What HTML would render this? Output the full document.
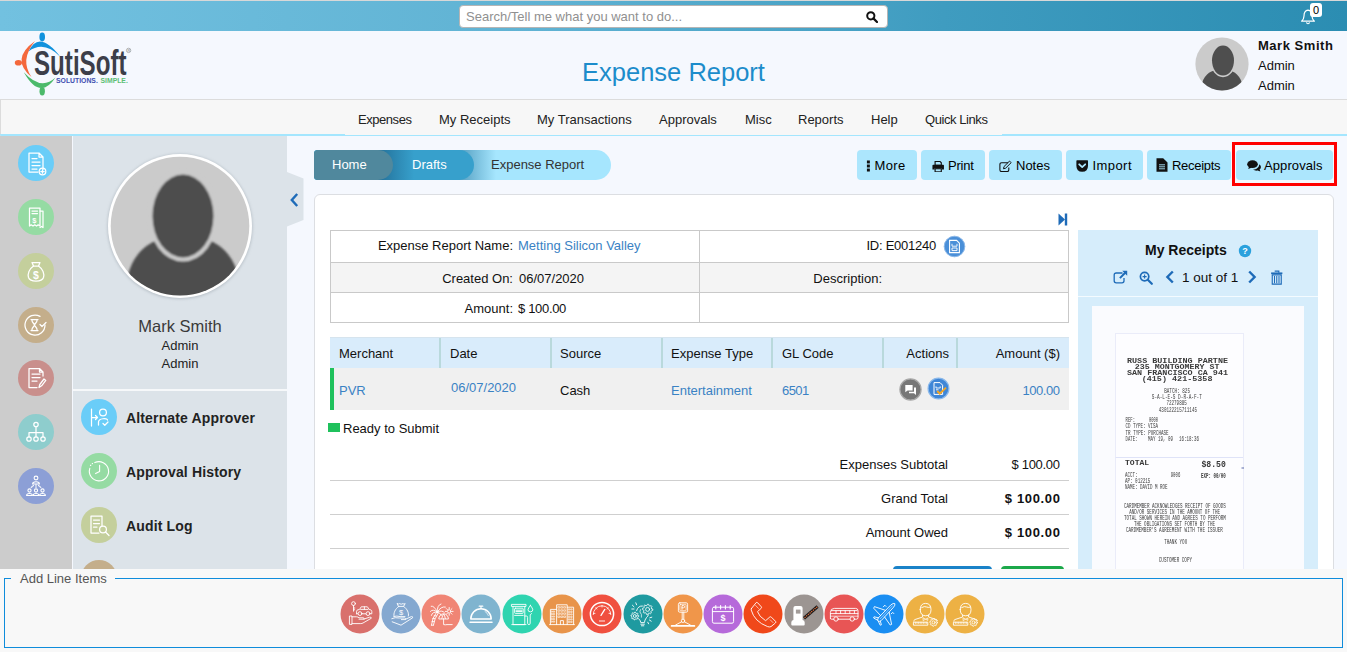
<!DOCTYPE html>
<html>
<head>
<meta charset="utf-8">
<title>Expense Report</title>
<style>
*{box-sizing:border-box;margin:0;padding:0}
html,body{width:1347px;height:652px;overflow:hidden}
body{font-family:"Liberation Sans",sans-serif;font-size:13px;color:#111;background:#f5f8fe;position:relative}
.abs{position:absolute}
/* top bar */
#topbar{left:0;top:0;width:1347px;height:31px;background:linear-gradient(90deg,#72c1e0 0%,#5fb2d3 40%,#3f9cc0 70%,#2b8db2 100%);border-top:1px solid #d8d8d8}
#search{left:459px;top:5px;width:429px;height:23px;background:#fff;border:1px solid #b5b5b5;border-radius:4px;color:#909090;font-size:13px;line-height:21px;padding-left:6px}
/* header */
#header{left:0;top:31px;width:1347px;height:68px;background:#f5f8fe}
#title{left:0;top:54px;width:1347px;text-align:center;font-size:25.5px;color:#1c8ccb;line-height:36px}
/* nav */
#nav{left:0;top:99px;width:1347px;height:37px;background:#f7f7f7;border-top:1px solid #dcdcdc;border-left:1px solid #dcdcdc;border-bottom:1px solid #a4e6fe}
#nav span{position:absolute;top:12px;font-size:13px;color:#222;white-space:nowrap}
/* left */
#strip{left:0;top:136px;width:72px;height:434px;background:#cccccc}
#panel{left:73px;top:136px;width:214px;height:434px;background:#dce3e9}
.ico{position:absolute;border-radius:50%}
/* main */
#card{left:314px;top:194px;width:1020px;height:390px;background:#fff;border:1px solid #dcdee2;border-radius:6px}
.btn{position:absolute;top:150px;height:30px;background:#ace6fd;border-radius:4px;font-size:13px;line-height:30px;color:#000;white-space:nowrap}
/* bottom */
#bottom{left:0;top:569px;width:1347px;height:83px;background:#f8f8f8}
#fs{left:4px;top:578px;width:1339px;height:70px;border:1px solid #0f8cdb}
</style>
</head>
<body>
<div id="topbar" class="abs"></div>
<div id="search" class="abs">Search/Tell me what you want to do...</div>
<div id="header" class="abs"></div>
<svg class="abs" style="left:866px;top:11px" width="12" height="12" viewBox="0 0 12 12"><circle cx="4.8" cy="4.8" r="3.6" fill="none" stroke="#111" stroke-width="2"/><path d="M7.4 7.4 L11 11" stroke="#111" stroke-width="2.2" stroke-linecap="round"/></svg>
<!-- bell -->
<svg class="abs" style="left:1299px;top:8px" width="18" height="18" viewBox="0 0 18 18"><path d="M9 2.2 C5.8 2.6 5 5.4 5 8 C5 10.6 4 12 2.6 13.2 L15.4 13.2 C14 12 13 10.6 13 8 C13 5.4 12.2 2.6 9 2.2 Z" fill="none" stroke="#fff" stroke-width="1.2" stroke-linejoin="round"/><path d="M7.6 14.2 C7.6 16.2 10.4 16.2 10.4 14.2" fill="none" stroke="#fff" stroke-width="1.1"/></svg>
<div class="abs" style="left:1310px;top:3px;width:12px;height:14px;background:#fff;border-radius:3px;font-size:11px;line-height:14px;text-align:center;color:#000">0</div>
<!-- logo -->
<svg class="abs" style="left:8px;top:30px" width="132" height="70" viewBox="8 30 132 70">
<ellipse cx="42.2" cy="37" rx="2.8" ry="4.4" fill="#1192dd"/>
<path d="M28.5 51.5 Q39 29 60.5 57 Q44 40 28.5 51.5 Z" fill="#1192dd"/>
<ellipse cx="18.4" cy="62.8" rx="3.6" ry="2.8" fill="#f4683c"/>
<path d="M35 41 Q10 59 31.5 77 Q19.5 60 35 41 Z" fill="#f4683c"/>
<ellipse cx="42.2" cy="91.2" rx="2.7" ry="4.2" fill="#4cba6b"/>
<path d="M23.8 72.2 Q40 101 55.5 77.5 Q41 91 23.8 72.2 Z" fill="#4cba6b"/>
<text x="34" y="75.2" font-family="Liberation Sans, sans-serif" font-weight="bold" font-size="35" fill="#3c3e49" textLength="92.5" lengthAdjust="spacingAndGlyphs">SutiSoft</text>
<text x="56" y="82.9" font-family="Liberation Sans, sans-serif" font-weight="bold" font-size="6.8" fill="#3d4eb0" textLength="41.8" lengthAdjust="spacingAndGlyphs">SOLUTIONS.</text>
<text x="100.5" y="82.9" font-family="Liberation Sans, sans-serif" font-weight="bold" font-size="6.8" fill="#5bbf75" textLength="27.3" lengthAdjust="spacingAndGlyphs">SIMPLE.</text>
<circle cx="128.6" cy="50.4" r="2.2" fill="none" stroke="#8a8a8a" stroke-width="0.6"/>
<text x="127.4" y="51.7" font-family="Liberation Sans, sans-serif" font-size="3.6" fill="#777">R</text>
</svg>
<!-- user -->
<svg class="abs" style="left:1195px;top:37px" width="54" height="54" viewBox="0 0 54 54"><defs><clipPath id="cpu"><circle cx="27" cy="27" r="26.6"/></clipPath></defs><circle cx="27" cy="27" r="26.6" fill="#cbcbcb"/><g clip-path="url(#cpu)"><path d="M6 54 C6 42 12 35.5 19 33.5 L35 33.5 C42 35.5 48 42 48 54 Z" fill="#4e4e4e"/><ellipse cx="28" cy="23.6" rx="12.6" ry="16.6" fill="#cbcbcb"/><ellipse cx="28" cy="23.6" rx="11" ry="15" fill="#4e4e4e"/></g></svg>
<div class="abs" style="left:1258px;top:38px;font-size:13px;font-weight:bold;letter-spacing:0.53px;color:#111;white-space:nowrap;line-height:15px">Mark Smith</div>
<div class="abs" style="left:1258px;top:58px;font-size:13px;color:#111;line-height:15px">Admin</div>
<div class="abs" style="left:1258px;top:78px;font-size:13px;color:#111;line-height:15px">Admin</div>
<div id="title" class="abs">Expense Report</div>
<div id="nav" class="abs">
<span style="left:357px;letter-spacing:-0.45px">Expenses</span>
<span style="left:438px">My Receipts</span>
<span style="left:536px">My Transactions</span>
<span style="left:658px">Approvals</span>
<span style="left:744px">Misc</span>
<span style="left:797px">Reports</span>
<span style="left:870px">Help</span>
<span style="left:924px;letter-spacing:-0.43px">Quick Links</span>
</div>
<div class="abs" style="left:0;top:134px;width:345px;height:1px;background:#a4e6fe"></div><div class="abs" style="left:1002px;top:134px;width:345px;height:1px;background:#a4e6fe"></div>
<div id="strip" class="abs"></div>
<div id="panel" class="abs"></div>
<svg class="abs" style="left:18px;top:144.8px" width="36" height="36" viewBox="0 0 36 36"><circle cx="18" cy="18" r="18" fill="#6acdf8"/><g fill="none" stroke="#fff" stroke-width="1.25" stroke-linecap="round" stroke-linejoin="round"><path d="M11 8 H21 L25 12 V24.5 M25 12 H21 V8 M11 8 V27 H20"/><path d="M14 13.5H19M14 17H22M14 20.5H22M14 24H19"/><circle cx="24.5" cy="26.5" r="3.3"/><path d="M24.5 24.8V28.2M22.8 26.5H26.2"/></g></svg>
<svg class="abs" style="left:18px;top:198.7px" width="36" height="36" viewBox="0 0 36 36"><circle cx="18" cy="18" r="18" fill="#95dba3"/><g fill="none" stroke="#fff" stroke-width="1.25" stroke-linecap="round" stroke-linejoin="round"><path d="M11.5 9 H22 V27 L20.2 25.8 L18.5 27 L16.8 25.8 L15 27 L13.2 25.8 L11.5 27 Z"/><path d="M22 12 H25 V28.5 L23.5 27.5 L22 28.5"/><path d="M14 12H19.5M14 14.5H19.5"/><text x="14.2" y="23.5" font-size="7.5" font-family="Liberation Sans" font-weight="bold" fill="#fff" stroke="none">$</text></g></svg>
<svg class="abs" style="left:18px;top:252.6px" width="36" height="36" viewBox="0 0 36 36"><circle cx="18" cy="18" r="18" fill="#c4cf9c"/><g fill="none" stroke="#fff" stroke-width="1.25" stroke-linecap="round" stroke-linejoin="round"><path d="M14 9.5 H22 L20.5 13 H15.5 Z"/><path d="M15.5 13 C11 16 9.5 21 10.5 24.5 C11.5 27.5 14 28 18 28 C22 28 24.5 27.5 25.5 24.5 C26.5 21 25 16 20.5 13"/><text x="14.9" y="25.6" font-size="10.5" font-family="Liberation Sans" font-weight="bold" fill="#fff" stroke="none">$</text></g></svg>
<svg class="abs" style="left:18px;top:306.5px" width="36" height="36" viewBox="0 0 36 36"><circle cx="18" cy="18" r="18" fill="#c4ae8b"/><g fill="none" stroke="#fff" stroke-width="1.25" stroke-linecap="round" stroke-linejoin="round"><path d="M27 18 A10 10 0 1 1 22 9.4"/><path d="M13 12.5H20M13 23.5H20M13.8 12.5 C13.8 16 16.5 16.5 16.5 18 C16.5 19.5 13.8 20 13.8 23.5 M19.2 12.5 C19.2 16 16.5 16.5 16.5 18 C16.5 19.5 19.2 20 19.2 23.5"/><path d="M22 17.5 L24 19.5 L28 15.5"/></g></svg>
<svg class="abs" style="left:18px;top:360.4px" width="36" height="36" viewBox="0 0 36 36"><circle cx="18" cy="18" r="18" fill="#c98f8c"/><g fill="none" stroke="#fff" stroke-width="1.25" stroke-linecap="round" stroke-linejoin="round"><path d="M11 8.5 H21.5 L25 12 V16 M25 12 H21.5 V8.5 M11 8.5 V27.5 H19"/><path d="M14 14H22M14 17.5H22M14 21H19"/><path d="M21 27.5 L21.8 24.5 L26 19 L27.8 20.4 L23.6 25.8 Z"/></g></svg>
<svg class="abs" style="left:18px;top:414.3px" width="36" height="36" viewBox="0 0 36 36"><circle cx="18" cy="18" r="18" fill="#8ecdcd"/><g fill="none" stroke="#fff" stroke-width="1.25" stroke-linecap="round" stroke-linejoin="round"><circle cx="18" cy="10.5" r="2.2"/><circle cx="11" cy="25" r="2.2"/><circle cx="18" cy="25" r="2.2"/><circle cx="25" cy="25" r="2.2"/><path d="M18 12.7V22.8M11 22.8V18.5H25V22.8"/></g></svg>
<svg class="abs" style="left:18px;top:468.2px" width="36" height="36" viewBox="0 0 36 36"><circle cx="18" cy="18" r="18" fill="#8c9fd6"/><g fill="none" stroke="#fff" stroke-width="1.1" stroke-linecap="round" stroke-linejoin="round" stroke-width="0.9"><circle cx="18" cy="10" r="1.9"/><path d="M14.6 16 C14.6 13 21.4 13 21.4 16 Z"/><circle cx="11.5" cy="22.5" r="1.6"/><path d="M8.6 27.5 C8.6 24.8 14.4 24.8 14.4 27.5 Z"/><circle cx="18" cy="22.5" r="1.6"/><path d="M15.1 27.5 C15.1 24.8 20.9 24.8 20.9 27.5 Z"/><circle cx="24.5" cy="22.5" r="1.6"/><path d="M21.6 27.5 C21.6 24.8 27.4 24.8 27.4 27.5 Z"/><path d="M18 16.5V20M15.5 17.5L12.5 20M20.5 17.5L23.5 20" stroke-dasharray="1 1"/></g></svg>
<svg class="abs" style="left:104px;top:150px;overflow:visible" width="152" height="152" viewBox="0 0 152 152"><defs><clipPath id="cpa"><circle cx="76" cy="76" r="69.5"/></clipPath><filter id="sh" x="-20%" y="-20%" width="140%" height="140%"><feGaussianBlur stdDeviation="1.6"/></filter><filter id="ab" x="-10%" y="-10%" width="120%" height="120%"><feGaussianBlur stdDeviation="0.8"/></filter></defs><circle cx="76" cy="76.5" r="72.5" fill="#9aa3ab" opacity="0.55" filter="url(#sh)"/><circle cx="76" cy="76" r="72" fill="#fff"/><circle cx="76" cy="76" r="69.3" fill="#cbcbcb"/><g clip-path="url(#cpa)"><g filter="url(#ab)"><path d="M21 152 C21 112 36 96 58 88 L100 88 C122 96 137 112 137 152 Z" fill="#4d4d4d"/><ellipse cx="79" cy="66" rx="34.5" ry="45.5" fill="#cbcbcb"/><ellipse cx="79" cy="66" rx="30.5" ry="41.5" fill="#4d4d4d"/></g></g></svg>
<div class="abs" style="left:73px;top:316px;width:214px;text-align:center;font-size:16.5px;line-height:20px;color:#3a3a3a">Mark Smith</div>
<div class="abs" style="left:73px;top:338px;width:214px;text-align:center;font-size:13px;line-height:15px;color:#222">Admin</div>
<div class="abs" style="left:73px;top:356px;width:214px;text-align:center;font-size:13px;line-height:15px;color:#222">Admin</div>
<div class="abs" style="left:73px;top:389px;width:214px;height:1.5px;background:#f6f8fa"></div>
<svg class="abs" style="left:287px;top:172px" width="18" height="56" viewBox="0 0 18 56"><path d="M0 0 L16.5 6.5 V48 L0 54.5 Z" fill="#dce3e9"/><path d="M10.2 22 L4.8 28 L10.2 34" fill="none" stroke="#1e6bb8" stroke-width="2.4"/></svg>
<svg class="abs" style="left:81px;top:399px" width="36" height="36" viewBox="0 0 36 36"><circle cx="18" cy="18" r="18" fill="#6acdf8"/><g fill="none" stroke="#fff" stroke-width="1.25" stroke-linecap="round" stroke-linejoin="round"><path d="M10.5 10V27M10.5 18.5H16.5M14.5 16.5L16.5 18.5L14.5 20.5"/><circle cx="22" cy="13.5" r="3.4"/><path d="M17.5 26 V23 C17.5 19 26.5 19 26.5 21"/><path d="M22 24.5 L23.8 26.3 L27 23"/></g></svg>
<div class="abs" style="left:126px;top:409px;font-size:14px;font-weight:bold;line-height:18px;color:#222;white-space:nowrap;letter-spacing:0.15px">Alternate Approver</div>
<svg class="abs" style="left:81px;top:453px" width="36" height="36" viewBox="0 0 36 36"><circle cx="18" cy="18" r="18" fill="#95dba3"/><g fill="none" stroke="#fff" stroke-width="1.1" stroke-linecap="round" stroke-linejoin="round" stroke-width="1.7"><path d="M13.8 9.6 A9.6 9.6 0 1 1 8.8 15.4"/><path d="M18.6 12.4V18.6L14.6 20.6"/><path d="M9.5 12.5 L11.5 10.5" stroke-dasharray="0.5 2"/></g></svg>
<div class="abs" style="left:126px;top:463px;font-size:14px;font-weight:bold;line-height:18px;color:#222;white-space:nowrap;letter-spacing:0.15px">Approval History</div>
<svg class="abs" style="left:81px;top:507px" width="36" height="36" viewBox="0 0 36 36"><circle cx="18" cy="18" r="18" fill="#c4cf9c"/><g fill="none" stroke="#fff" stroke-width="1.25" stroke-linecap="round" stroke-linejoin="round"><path d="M21 19 V9 H10 V26 H18"/><path d="M12.5 13H18.5M12.5 16.5H18.5M12.5 20H16"/><circle cx="22" cy="22.5" r="3.4"/><path d="M24.5 25 L28 28.5"/></g></svg>
<div class="abs" style="left:126px;top:517px;font-size:14px;font-weight:bold;line-height:18px;color:#222;white-space:nowrap;letter-spacing:0.15px">Audit Log</div>
<div class="abs" style="left:81px;top:560px;width:36px;height:36px;border-radius:50%;background:#c4ae8b"></div>
<div class="abs" style="left:314px;top:150px;width:297px;height:30px;border-radius:3px 15px 15px 3px;background:#a6e6fe;overflow:hidden">
<div class="abs" style="left:140px;top:0;width:42px;height:30px;background:linear-gradient(90deg,rgba(40,120,160,0.75),rgba(166,230,254,0))"></div>
<div class="abs" style="left:0;top:0;width:160px;height:30px;border-radius:3px 15px 15px 3px;background:#37a0cc"></div>
<div class="abs" style="left:64px;top:0;width:36px;height:30px;background:linear-gradient(90deg,rgba(30,100,140,0.8),rgba(55,160,204,0))"></div>
<div class="abs" style="left:0;top:0;width:79px;height:30px;border-radius:3px 15px 15px 3px;background:#50889d"></div>
<div class="abs" style="left:18px;top:7px;font-size:13px;line-height:16px;color:#fff">Home</div>
<div class="abs" style="left:98px;top:7px;font-size:13px;line-height:16px;color:#fff">Drafts</div>
<div class="abs" style="left:177px;top:7px;font-size:13px;line-height:16px;color:#333;white-space:nowrap">Expense Report</div>
</div>
<div class="btn" style="left:857px;width:60px"><svg class="abs" style="left:8.6px;top:10px" width="4.6" height="12" viewBox="0 0 5 13"><rect x="1" y="0.5" width="3.2" height="3.2" fill="#111"/><rect x="1" y="4.9" width="3.2" height="3.2" fill="#111"/><rect x="1" y="9.3" width="3.2" height="3.2" fill="#111"/></svg><span class="abs" style="left:17.5px;top:1px;letter-spacing:0.35px">More</span></div>
<div class="btn" style="left:921px;width:64px"><svg class="abs" style="left:10.6px;top:10.5px" width="12.4" height="11.5" viewBox="0 0 14 13"><path d="M3.5 0.5 H9 L10.5 2 V5 H3.5 Z" fill="none" stroke="#111" stroke-width="1.3"/><path d="M0.5 5 Q0.5 4.2 1.5 4.2 H12.5 Q13.5 4.2 13.5 5 V9.5 H11 V8 H3 V9.5 H0.5 Z" fill="#111"/><rect x="3.5" y="8.7" width="7" height="3.6" fill="none" stroke="#111" stroke-width="1.3"/></svg><span class="abs" style="left:27px;top:1px;letter-spacing:-0.2px">Print</span></div>
<div class="btn" style="left:989px;width:73px"><svg class="abs" style="left:9.6px;top:9.5px" width="13.4" height="12.5" viewBox="0 0 15 14"><path d="M10 3 H3 Q1 3 1 5 V11 Q1 13 3 13 H9 Q11 13 11 11 V8.5" fill="none" stroke="#111" stroke-width="1.2"/><path d="M5 9.8 L5.6 7.4 L11.8 1.2 L13.6 3 L7.4 9.2 Z" fill="none" stroke="#111" stroke-width="1.1" stroke-linejoin="round"/></svg><span class="abs" style="left:27px;top:1px;letter-spacing:0px">Notes</span></div>
<div class="btn" style="left:1066px;width:77px"><svg class="abs" style="left:10.2px;top:9.8px" width="12.4" height="12.2" viewBox="0 0 13 13"><path d="M0.3 1 Q0.3 0.3 1 0.3 H12 Q12.7 0.3 12.7 1 V6 Q12.7 12.5 6.5 12.5 Q0.3 12.5 0.3 6 Z" fill="#111"/><path d="M3.3 4.6 L6.5 7.6 L9.7 4.6" fill="none" stroke="#ace6fd" stroke-width="1.9" stroke-linecap="round" stroke-linejoin="round"/></svg><span class="abs" style="left:26.5px;top:1px;letter-spacing:0.43px">Import</span></div>
<div class="btn" style="left:1147px;width:84px"><svg class="abs" style="left:9px;top:8px" width="12" height="14" viewBox="0 0 12 14"><path d="M0.5 0.3 H7.2 L11.5 4.6 V13.7 H0.5 Z" fill="#111"/><path d="M3 6.8H9M3 8.8H9M3 10.8H9" stroke="#ace6fd" stroke-width="0.9"/></svg><span class="abs" style="left:25px;top:1px;letter-spacing:-0.3px">Receipts</span></div>
<div class="btn" style="left:1236px;width:97px"><svg class="abs" style="left:11px;top:10px" width="14" height="12" viewBox="0 0 14 12"><ellipse cx="5.5" cy="4.2" rx="5.3" ry="3.9" fill="#111"/><path d="M1.2 9 L2.2 6 L5 7.6 Z" fill="#111"/><path d="M12.2 4.2 C13.4 5 13.9 6 13.9 7 C13.9 8 13.4 9 12.6 9.6 L13.4 11.6 L10.6 10.6 C9 10.9 7.2 10.6 6 9.6 C9.5 9.4 12.2 7.4 12.2 4.2 Z" fill="#111"/></svg><span class="abs" style="left:28px;top:1px;letter-spacing:0.1px">Approvals</span></div>
<div class="abs" style="left:1232px;top:142px;width:105px;height:44px;border:3px solid #ff0000"></div>
<div id="card" class="abs"></div>
<svg class="abs" style="left:1058px;top:213px" width="10" height="13" viewBox="0 0 10 13"><path d="M0.5 0.5 L7 6.5 L0.5 12.5 Z" fill="#1e6bb8"/><rect x="6.8" y="0.5" width="2.4" height="12" fill="#1e6bb8"/></svg>
<div class="abs" style="left:330px;top:230px;width:739px;height:93px;border:1px solid #c9c9c9;background:#fff"></div>
<div class="abs" style="left:331px;top:262px;width:737px;height:31px;background:#f4f4f4;border-top:1px solid #c9c9c9;border-bottom:1px solid #c9c9c9"></div>
<div class="abs" style="left:699px;top:231px;width:1px;height:91px;background:#c9c9c9"></div>
<div class="abs" style="font-size:13px;line-height:15px;white-space:nowrap;color:#111;left:331px;top:238px;width:182px;text-align:right">Expense Report Name:</div>
<div class="abs" style="font-size:13px;line-height:15px;white-space:nowrap;color:#111;left:518px;top:238px;color:#3a82c4">Metting Silicon Valley</div>
<div class="abs" style="font-size:13px;line-height:15px;white-space:nowrap;color:#111;left:331px;top:271px;width:182px;text-align:right">Created On:</div>
<div class="abs" style="font-size:13px;line-height:15px;white-space:nowrap;color:#111;left:519px;top:271px">06/07/2020</div>
<div class="abs" style="font-size:13px;line-height:15px;white-space:nowrap;color:#111;left:331px;top:301px;width:182px;text-align:right">Amount:</div>
<div class="abs" style="font-size:13px;line-height:15px;white-space:nowrap;color:#111;left:518px;top:301px;letter-spacing:-0.33px">$ 100.00</div>
<div class="abs" style="font-size:13px;line-height:15px;white-space:nowrap;color:#111;left:700px;top:238px;width:236px;text-align:right;letter-spacing:-0.25px">ID: E001240</div>
<div class="abs" style="font-size:13px;line-height:15px;white-space:nowrap;color:#111;left:700px;top:271px;width:182px;text-align:right">Description:</div>
<svg class="abs" style="left:943px;top:235px" width="23" height="23" viewBox="0 0 23 23"><circle cx="11.5" cy="11.5" r="10.3" fill="#4a8fd8" stroke="#8cb8e8" stroke-width="1"/><path d="M6.6 5.4 H13.6 L16.4 8.2 V17.6 H6.6 Z" fill="none" stroke="#fff" stroke-width="1.1"/><path d="M9 8.8 V11.2 H14 V8.8 M9 13 H14 V15.6 H9 Z" fill="none" stroke="#fff" stroke-width="0.9"/></svg>
<div class="abs" style="left:330px;top:337px;width:739px;height:31px;background:#d9ecfb;border-top:1px solid #d6e4ee"></div>
<div class="abs" style="left:439px;top:338px;width:2px;height:30px;background:#b9d9dc"></div>
<div class="abs" style="left:550px;top:338px;width:2px;height:30px;background:#b9d9dc"></div>
<div class="abs" style="left:661px;top:338px;width:2px;height:30px;background:#b9d9dc"></div>
<div class="abs" style="left:771px;top:338px;width:2px;height:30px;background:#b9d9dc"></div>
<div class="abs" style="left:882px;top:338px;width:2px;height:30px;background:#b9d9dc"></div>
<div class="abs" style="left:956px;top:338px;width:2px;height:30px;background:#b9d9dc"></div>
<div class="abs" style="left:330px;top:368px;width:739px;height:42px;background:#f0f0f0"></div>
<div class="abs" style="left:330px;top:368px;width:4px;height:42px;background:#1fc15c"></div>
<div class="abs" style="font-size:13px;line-height:15px;white-space:nowrap;color:#111;top:346px;left:339px">Merchant</div>
<div class="abs" style="font-size:13px;line-height:15px;white-space:nowrap;color:#111;top:346px;left:450px">Date</div>
<div class="abs" style="font-size:13px;line-height:15px;white-space:nowrap;color:#111;top:346px;left:560px">Source</div>
<div class="abs" style="font-size:13px;line-height:15px;white-space:nowrap;color:#111;top:346px;left:671px">Expense Type</div>
<div class="abs" style="font-size:13px;line-height:15px;white-space:nowrap;color:#111;top:346px;left:782px">GL Code</div>
<div class="abs" style="font-size:13px;line-height:15px;white-space:nowrap;color:#111;top:346px;left:883px;width:66px;text-align:right">Actions</div>
<div class="abs" style="font-size:13px;line-height:15px;white-space:nowrap;color:#111;top:346px;left:957px;width:103px;text-align:right">Amount ($)</div>
<div class="abs" style="font-size:13px;line-height:15px;white-space:nowrap;color:#111;top:383px;color:#3a82c4;left:339px">PVR</div>
<div class="abs" style="font-size:13px;line-height:15px;white-space:nowrap;color:#111;top:383px;color:#3a82c4;left:451px;top:380px">06/07/2020</div>
<div class="abs" style="font-size:13px;line-height:15px;white-space:nowrap;color:#111;top:383px;color:#3a82c4;left:560px;color:#111">Cash</div>
<div class="abs" style="font-size:13px;line-height:15px;white-space:nowrap;color:#111;top:383px;color:#3a82c4;left:671px">Entertainment</div>
<div class="abs" style="font-size:13px;line-height:15px;white-space:nowrap;color:#111;top:383px;color:#3a82c4;left:782px;letter-spacing:-0.6px">6501</div>
<div class="abs" style="font-size:13px;line-height:15px;white-space:nowrap;color:#111;top:383px;color:#3a82c4;left:957px;width:103px;text-align:right;letter-spacing:-0.45px;margin-left:-0.45px">100.00</div>
<svg class="abs" style="left:899px;top:378px" width="23" height="23" viewBox="0 0 23 23"><circle cx="11.5" cy="11.5" r="10.6" fill="#777" stroke="#a8a8a8" stroke-width="1.2"/><path d="M6.3 7 H13.6 V12.4 H8.6 L6.3 14.3 Z" fill="#fff"/><path d="M15 9.6 H17 V15.2 L17 17 L15 15.2 H10 V13.8 H15 Z" fill="#fff"/></svg>
<svg class="abs" style="left:927px;top:377px" width="23" height="23" viewBox="0 0 23 23"><circle cx="11.5" cy="11.5" r="10.4" fill="#3f86d6" stroke="#8ab8ea" stroke-width="1.2"/><path d="M7 5.6 H13 L15.6 8.2 V17.4 H7 Z" fill="none" stroke="#fff" stroke-width="1"/><path d="M9 9.4 V11 H13.2 V9.4 M9 12.8 H11.5" fill="none" stroke="#fff" stroke-width="0.9"/><path d="M10.2 14 L12.8 16.6 L19 10.6" fill="none" stroke="#f5a623" stroke-width="2"/></svg>
<div class="abs" style="left:328px;top:423px;width:12px;height:9px;background:#1fc15c"></div>
<div class="abs" style="font-size:13px;line-height:15px;white-space:nowrap;color:#111;left:343px;top:421px">Ready to Submit</div>
<div class="abs" style="left:330px;top:480px;width:739px;height:1px;background:#cfcfcf"></div>
<div class="abs" style="left:330px;top:514px;width:739px;height:1px;background:#cfcfcf"></div>
<div class="abs" style="left:330px;top:548px;width:739px;height:1px;background:#cfcfcf"></div>
<div class="abs" style="font-size:13px;line-height:15px;white-space:nowrap;color:#111;left:748px;top:457px;width:200px;text-align:right">Expenses Subtotal</div>
<div class="abs" style="font-size:13px;line-height:15px;white-space:nowrap;color:#111;left:960px;top:457px;width:100px;text-align:right;letter-spacing:-0.3px;margin-left:-0.3px">$ 100.00</div>
<div class="abs" style="font-size:13px;line-height:15px;white-space:nowrap;color:#111;left:748px;top:491px;width:200px;text-align:right">Grand Total</div>
<div class="abs" style="font-size:13px;line-height:15px;white-space:nowrap;color:#111;left:960px;top:491px;width:100px;text-align:right;font-weight:bold;letter-spacing:0.66px;margin-left:0.66px">$ 100.00</div>
<div class="abs" style="font-size:13px;line-height:15px;white-space:nowrap;color:#111;left:748px;top:525px;width:200px;text-align:right">Amount Owed</div>
<div class="abs" style="font-size:13px;line-height:15px;white-space:nowrap;color:#111;left:960px;top:525px;width:100px;text-align:right;font-weight:bold;letter-spacing:0.66px;margin-left:0.66px">$ 100.00</div>
<div class="abs" style="left:893px;top:566px;width:99px;height:30px;border-radius:4px;background:#1a82c8"></div>
<div class="abs" style="left:1001px;top:566px;width:63px;height:30px;border-radius:4px;background:#1ca84a"></div>
<div class="abs" style="left:1078px;top:230px;width:240px;height:345px;background:#d6edfb"></div>
<div class="abs" style="left:1078px;top:296px;width:240px;height:1px;background:#f4fbff"></div>
<div class="abs" style="left:1145px;top:242px;font-size:14px;font-weight:bold;line-height:17px;color:#111;white-space:nowrap;letter-spacing:0px">My Receipts</div>
<svg class="abs" style="left:1238px;top:244px" width="14" height="14" viewBox="0 0 14 14"><circle cx="7" cy="7" r="6.2" fill="#2aa1dd"/><text x="7" y="10.2" text-anchor="middle" font-family="Liberation Sans" font-weight="bold" font-size="9" fill="#fff">?</text></svg>
<svg class="abs" style="left:1113px;top:270px" width="15" height="14" viewBox="0 0 15 14"><path d="M9.5 3 H3.2 Q1.2 3 1.2 5 V10.8 Q1.2 12.8 3.2 12.8 H9 Q11 12.8 11 10.8 V8" fill="none" stroke="#1e6bb8" stroke-width="1.3"/><path d="M9.2 0.8 H14.2 V5.8 L12.4 4 L7.6 8.8 L6.2 7.4 L11 2.6 Z" fill="#1e6bb8"/></svg>
<svg class="abs" style="left:1139px;top:271px" width="14" height="14" viewBox="0 0 14 14"><circle cx="5.6" cy="5.6" r="4.2" fill="none" stroke="#1e6bb8" stroke-width="1.7"/><path d="M8.8 8.8 L12.8 12.8" stroke="#1e6bb8" stroke-width="2.2" stroke-linecap="round"/><path d="M5.6 3.6V7.6M3.6 5.6H7.6" stroke="#1e6bb8" stroke-width="1.1"/></svg>
<svg class="abs" style="left:1165px;top:270px" width="10" height="14" viewBox="0 0 10 14"><path d="M7.8 1.5 L2.4 7 L7.8 12.5" fill="none" stroke="#1e6bb8" stroke-width="2.4"/></svg>
<div class="abs" style="left:1182px;top:269px;font-size:13.5px;line-height:17px;color:#111;white-space:nowrap">1 out of 1</div>
<svg class="abs" style="left:1247px;top:270px" width="10" height="14" viewBox="0 0 10 14"><path d="M2.2 1.5 L7.6 7 L2.2 12.5" fill="none" stroke="#1e6bb8" stroke-width="2.4"/></svg>
<svg class="abs" style="left:1270px;top:270px" width="13.5" height="15" viewBox="0 0 14 16"><path d="M4.8 1.2 H9.2 V3" fill="none" stroke="#1e6bb8" stroke-width="1.2"/><rect x="1" y="2.6" width="12" height="1.8" fill="#1e6bb8"/><path d="M2.2 5.2 H11.8 V15 H2.2 Z" fill="none" stroke="#1e6bb8" stroke-width="1.2"/><path d="M4.6 6.5V14M7 6.5V14M9.4 6.5V14" stroke="#1e6bb8" stroke-width="1.1"/></svg>
<div class="abs" style="left:1092px;top:306px;width:212px;height:264px;background:#fafbfe;overflow:hidden"><svg class="abs" style="left:0;top:0" width="212" height="264" viewBox="0 0 212 264"><defs><filter id="rb" x="-5%" y="-5%" width="110%" height="110%"><feGaussianBlur stdDeviation="0.28"/></filter></defs>
<rect x="23.5" y="27.5" width="128" height="240" fill="#fdfdff" stroke="#eaecf9" stroke-width="1"/>
<path d="M23.5 151.5 H151" stroke="#dfe3f8" stroke-width="1.2"/>
<path d="M149.5 162 h2.5" stroke="#5a6aa8" stroke-width="1"/>
<g font-family="Liberation Mono, monospace" fill="#3a3a3a" filter="url(#rb)">
<text x="35.0" y="56.7" font-size="7.3" font-weight="bold" textLength="101.0" lengthAdjust="spacingAndGlyphs">RUSS BUILDING PARTNE</text>
<text x="42.8" y="62.6" font-size="7.3" font-weight="bold" textLength="84.6" lengthAdjust="spacingAndGlyphs">235 MONTGOMERY ST</text>
<text x="35.0" y="68.7" font-size="7.3" font-weight="bold" textLength="101.0" lengthAdjust="spacingAndGlyphs">SAN FRANCISCO CA 941</text>
<text x="49.7" y="75.4" font-size="7.3" font-weight="bold" textLength="70.8" lengthAdjust="spacingAndGlyphs">(415) 421-5358</text>
<text x="72.2" y="86.8" font-size="7.2" font-weight="normal" textLength="25.8" lengthAdjust="spacingAndGlyphs">BATCH: 825</text>
<text x="59.8" y="93.0" font-size="7.2" font-weight="normal" textLength="50.0" lengthAdjust="spacingAndGlyphs">S-A-L-E-S D-R-A-F-T</text>
<text x="74.4" y="99.2" font-size="7.2" font-weight="normal" textLength="20.4" lengthAdjust="spacingAndGlyphs">72279885</text>
<text x="66.8" y="105.6" font-size="7.2" font-weight="normal" textLength="38.2" lengthAdjust="spacingAndGlyphs">430122215711145</text>
<text x="33.6" y="116.2" font-size="7.2" font-weight="normal" textLength="9.4" lengthAdjust="spacingAndGlyphs">REF:</text>
<text x="57.0" y="116.2" font-size="7.2" font-weight="normal" textLength="9.0" lengthAdjust="spacingAndGlyphs">0000</text>
<text x="33.6" y="122.3" font-size="7.2" font-weight="normal" textLength="32.4" lengthAdjust="spacingAndGlyphs">CD TYPE: VISA</text>
<text x="33.6" y="128.6" font-size="7.2" font-weight="normal" textLength="42.9" lengthAdjust="spacingAndGlyphs">TR TYPE: PURCHASE</text>
<text x="33.6" y="135.2" font-size="7.2" font-weight="normal" textLength="11.9" lengthAdjust="spacingAndGlyphs">DATE:</text>
<text x="56.0" y="135.2" font-size="7.2" font-weight="normal" textLength="25.0" lengthAdjust="spacingAndGlyphs">MAY 19, 09</text>
<text x="87.0" y="135.2" font-size="7.2" font-weight="normal" textLength="20.0" lengthAdjust="spacingAndGlyphs">16:18:36</text>
<text x="33.0" y="158.8" font-size="7.3" font-weight="bold" textLength="24.2" lengthAdjust="spacingAndGlyphs">TOTAL</text>
<text x="109.4" y="161.4" font-size="8.2" font-weight="bold" textLength="24.4" lengthAdjust="spacingAndGlyphs">$8.50</text>
<text x="33.0" y="170.8" font-size="7.2" font-weight="normal" textLength="12.5" lengthAdjust="spacingAndGlyphs">ACCT:</text>
<text x="78.7" y="171.2" font-size="7.2" font-weight="normal" textLength="9.6" lengthAdjust="spacingAndGlyphs">9006</text>
<text x="109.0" y="172.0" font-size="7.6" font-weight="bold" textLength="24.8" lengthAdjust="spacingAndGlyphs">EXP: 00/00</text>
<text x="33.0" y="177.0" font-size="7.2" font-weight="normal" textLength="25.3" lengthAdjust="spacingAndGlyphs">AP: 012215</text>
<text x="33.0" y="183.0" font-size="7.2" font-weight="normal" textLength="42.4" lengthAdjust="spacingAndGlyphs">NAME: DAVID M ROE</text>
<text x="32.0" y="201.7" font-size="7.6" font-weight="normal" textLength="101.8" lengthAdjust="spacingAndGlyphs">CARDMEMBER ACKNOWLEDGES RECEIPT OF GOODS</text>
<text x="37.2" y="207.7" font-size="7.6" font-weight="normal" textLength="90.8" lengthAdjust="spacingAndGlyphs">AND/OR SERVICES IN THE AMOUNT OF THE</text>
<text x="32.0" y="214.0" font-size="7.6" font-weight="normal" textLength="101.8" lengthAdjust="spacingAndGlyphs">TOTAL SHOWN HEREIN AND AGREES TO PERFORM</text>
<text x="42.0" y="220.0" font-size="7.6" font-weight="normal" textLength="81.0" lengthAdjust="spacingAndGlyphs">THE OBLIGATIONS SET FORTH BY THE</text>
<text x="34.0" y="226.3" font-size="7.6" font-weight="normal" textLength="96.8" lengthAdjust="spacingAndGlyphs">CARDMEMBER&#39;S AGREEMENT WITH THE ISSUER</text>
<text x="72.2" y="237.8" font-size="7.6" font-weight="normal" textLength="23.0" lengthAdjust="spacingAndGlyphs">THANK YOU</text>
<text x="66.8" y="256.0" font-size="7.6" font-weight="normal" textLength="33.2" lengthAdjust="spacingAndGlyphs">CUSTOMER COPY</text>
</g></svg></div>
<div id="bottom" class="abs"></div>
<div id="fs" class="abs"></div>
<div class="abs" style="left:11px;top:572px;width:104px;height:14px;background:#f8f8f8"></div>
<div class="abs" style="left:20px;top:571px;font-size:13px;line-height:16px;color:#555;white-space:nowrap">Add Line Items</div>
<!--BICONS-->
<svg class="abs" style="left:340.45px;top:593.6px" width="40" height="40" viewBox="0 0 40 40"><circle cx="20" cy="20" r="19.5" fill="#d9706c"/><g fill="none" stroke="#fff" stroke-width="0.9" stroke-linecap="round" stroke-linejoin="round"><circle cx="13.5" cy="9.6" r="1.9"/><path d="M13.5 11.5V17.2M13.5 14H14.8M13.5 15.8H14.6"/><path d="M16.6 19.8 V17.2 Q16.6 16 18 15.8 L19.6 15.4 L21.2 12.8 H27.4 L29.2 15.4 L31 16 Q31.8 16.4 31.8 17.4 V19.8 H30.2 M25.8 19.8 H22.2 M17.8 19.8H16.6"/><path d="M20.6 15.4H28M24.4 12.8V15.4"/><circle cx="20" cy="19.6" r="1.9"/><circle cx="28" cy="19.6" r="1.9"/><rect x="9.8" y="22" width="2.2" height="8.4"/><path d="M12 22.8 H16.5 Q18 22.8 19 23.8 H23 Q24.4 23.8 24.2 25.2 H19 M24.2 25 L29.6 23.2 Q31.4 22.8 31.4 24.2 L23 29 Q22 29.6 20.8 29.6 H12"/></g></svg>
<svg class="abs" style="left:380.75px;top:593.6px" width="40" height="40" viewBox="0 0 40 40"><circle cx="20" cy="20" r="19.5" fill="#84a8d0"/><g fill="none" stroke="#fff" stroke-width="0.9" stroke-linecap="round" stroke-linejoin="round"><path d="M16.4 9.6 Q17.6 10.6 18.4 9.6 Q20.2 10.8 22 9.6 Q22.8 10.6 24.2 9.6 L22.6 12.4 H17.8 Z"/><path d="M17.8 12.4 C14 15 12.4 19 13 22.4 M22.6 12.4 C26.4 15 28 19 27.4 22"/><path d="M13 22.4 Q16 21.6 19 22.6 H24"/><text x="20.2" y="21.2" text-anchor="middle" font-size="7.5" font-family="Liberation Sans" fill="#fff" stroke="none">$</text><path d="M10.8 24.6 Q14 23 18.6 24 H23.6 Q25 24.2 24.6 25.6 H20.4 M24.6 25.2 L30.4 22.6 Q32 22.4 31.6 23.8 L20 31.2 L11.2 27.8"/></g></svg>
<svg class="abs" style="left:421.05px;top:593.6px" width="40" height="40" viewBox="0 0 40 40"><circle cx="20" cy="20" r="19.5" fill="#f08575"/><g fill="none" stroke="#fff" stroke-width="0.9" stroke-linecap="round" stroke-linejoin="round"><path d="M10.4 31.2 Q11 24 15.6 18.2 M12.4 31.2 Q13.4 24.4 17.2 19"/><path d="M10.4 31.2H12.4M11 27.6H13M11.8 24.6H13.8M13.2 21.8H15.2"/><path d="M16.2 18.2 Q12 14.4 9.4 17.4 M16.2 18.2 Q11.4 17.4 10.4 21.4 M16.2 18.2 Q13.4 11.4 10.2 12.2 M16.2 18.2 Q16 11 20 10 M16.2 18.2 Q20 12 24.4 13 M16.2 18.2 Q21 15.6 23.4 18.6 M16.2 18.2 Q19.4 18.6 20.4 21.4"/><circle cx="28.2" cy="17.4" r="1.7"/><path d="M30.80 17.40 L32.10 17.40"/><path d="M30.04 19.24 L30.96 20.16"/><path d="M28.20 20.00 L28.20 21.30"/><path d="M26.36 19.24 L25.44 20.16"/><path d="M25.60 17.40 L24.30 17.40"/><path d="M26.36 15.56 L25.44 14.64"/><path d="M28.20 14.80 L28.20 13.50"/><path d="M30.04 15.56 L30.96 14.64"/><path d="M17.8 24.6 A4.8 4.8 0 0 1 27.4 24.6 Z"/><path d="M20.8 24.6 Q21.4 21.4 22.6 19.9 Q23.8 21.4 24.4 24.6"/><path d="M22.6 24.6 V30.6 Q24.4 31 26 30.6 H31.2"/></g></svg>
<svg class="abs" style="left:461.35px;top:593.6px" width="40" height="40" viewBox="0 0 40 40"><circle cx="20" cy="20" r="19.5" fill="#7fb4cf"/><g fill="none" stroke="#fff" stroke-width="0.9" stroke-linecap="round" stroke-linejoin="round"><path d="M18.2 12.2 H21.8 M20 12.2 V14.6" stroke-width="1.2"/><path d="M9.8 25 A10.2 10.2 0 0 1 30.2 25 Z" stroke-width="1.5"/><path d="M24 17.4 Q26.6 19 27.4 21.6" stroke-width="0.7"/><path d="M9 28.2 H31" stroke-width="1.5"/></g></svg>
<svg class="abs" style="left:501.65px;top:593.6px" width="40" height="40" viewBox="0 0 40 40"><circle cx="20" cy="20" r="19.5" fill="#2fd4b0"/><g fill="none" stroke="#fff" stroke-width="0.9" stroke-linecap="round" stroke-linejoin="round"><rect x="9.8" y="10.4" width="14.2" height="2"/><path d="M11 12.4 V30.6 H22.8 V12.4 M9.8 30.6 H24"/><rect x="12.6" y="14.2" width="8.6" height="5.2" rx="0.8"/><path d="M14 16.2H20M14 17.6H20" stroke-width="1"/><path d="M12.6 21.4H21.2"/><path d="M22.8 22 H24.4 Q25.6 22 25.6 23.4 V29.2 Q25.6 30.6 26.9 30.6 Q28.2 30.6 28.2 29.2 V20.8 L29.6 19.6"/><path d="M28.4 11.4 Q30.8 14.4 30.8 15.8 Q30.8 17.8 28.4 17.8 Q26 17.8 26 15.8 Q26 14.4 28.4 11.4 Z"/></g></svg>
<svg class="abs" style="left:541.95px;top:593.6px" width="40" height="40" viewBox="0 0 40 40"><circle cx="20" cy="20" r="19.5" fill="#e8944a"/><g fill="none" stroke="#fff" stroke-width="0.9" stroke-linecap="round" stroke-linejoin="round" stroke-width="0.8"><path d="M14.6 30.6 V10.8 H25.2 V30.6 M8.4 30.6 V15.4 H14.6 M25.2 13.2 H31.6 V30.6 M7.6 30.6 H32.4"/><rect x="16.25" y="12.65" width="1.5" height="1.5" stroke-width="0.6"/><rect x="16.25" y="15.75" width="1.5" height="1.5" stroke-width="0.6"/><rect x="16.25" y="18.85" width="1.5" height="1.5" stroke-width="0.6"/><rect x="16.25" y="21.95" width="1.5" height="1.5" stroke-width="0.6"/><rect x="19.15" y="12.65" width="1.5" height="1.5" stroke-width="0.6"/><rect x="19.15" y="15.75" width="1.5" height="1.5" stroke-width="0.6"/><rect x="19.15" y="18.85" width="1.5" height="1.5" stroke-width="0.6"/><rect x="19.15" y="21.95" width="1.5" height="1.5" stroke-width="0.6"/><rect x="22.05" y="12.65" width="1.5" height="1.5" stroke-width="0.6"/><rect x="22.05" y="15.75" width="1.5" height="1.5" stroke-width="0.6"/><rect x="22.05" y="18.85" width="1.5" height="1.5" stroke-width="0.6"/><rect x="22.05" y="21.95" width="1.5" height="1.5" stroke-width="0.6"/><rect x="9.35" y="17.05" width="1.1" height="1.1" stroke-width="0.6"/><rect x="9.35" y="19.55" width="1.1" height="1.1" stroke-width="0.6"/><rect x="9.35" y="22.05" width="1.1" height="1.1" stroke-width="0.6"/><rect x="9.35" y="24.55" width="1.1" height="1.1" stroke-width="0.6"/><rect x="9.35" y="27.05" width="1.1" height="1.1" stroke-width="0.6"/><rect x="11.55" y="17.05" width="1.1" height="1.1" stroke-width="0.6"/><rect x="11.55" y="19.55" width="1.1" height="1.1" stroke-width="0.6"/><rect x="11.55" y="22.05" width="1.1" height="1.1" stroke-width="0.6"/><rect x="11.55" y="24.55" width="1.1" height="1.1" stroke-width="0.6"/><rect x="11.55" y="27.05" width="1.1" height="1.1" stroke-width="0.6"/><rect x="26.65" y="14.85" width="1.1" height="1.1" stroke-width="0.6"/><rect x="26.65" y="17.35" width="1.1" height="1.1" stroke-width="0.6"/><rect x="26.65" y="19.85" width="1.1" height="1.1" stroke-width="0.6"/><rect x="26.65" y="22.35" width="1.1" height="1.1" stroke-width="0.6"/><rect x="26.65" y="24.85" width="1.1" height="1.1" stroke-width="0.6"/><rect x="26.65" y="27.35" width="1.1" height="1.1" stroke-width="0.6"/><rect x="29.05" y="14.85" width="1.1" height="1.1" stroke-width="0.6"/><rect x="29.05" y="17.35" width="1.1" height="1.1" stroke-width="0.6"/><rect x="29.05" y="19.85" width="1.1" height="1.1" stroke-width="0.6"/><rect x="29.05" y="22.35" width="1.1" height="1.1" stroke-width="0.6"/><rect x="29.05" y="24.85" width="1.1" height="1.1" stroke-width="0.6"/><rect x="29.05" y="27.35" width="1.1" height="1.1" stroke-width="0.6"/><path d="M18.4 30.6 V26.6 H21.4 V30.6"/></g></svg>
<svg class="abs" style="left:582.25px;top:593.6px" width="40" height="40" viewBox="0 0 40 40"><circle cx="20" cy="20" r="19.5" fill="#f0503f"/><g fill="none" stroke="#fff" stroke-width="0.9" stroke-linecap="round" stroke-linejoin="round"><circle cx="20" cy="20" r="11.6" stroke-width="1.5"/><path d="M11.2 20.6 A8.8 8.8 0 0 1 28.8 20.6" stroke-width="0.8"/><path d="M20 11.4V13M13.8 13.8L14.8 15M26.2 13.8L25.2 15M11.4 19.4H13M28.6 19.4H27" stroke-width="0.8"/><path d="M19 21.4 L22.8 15.4" stroke-width="1.3"/><path d="M18 26.4V27.6M20 26.4V27.6M22 26.4V27.6" stroke-width="0.9"/></g></svg>
<svg class="abs" style="left:622.55px;top:593.6px" width="40" height="40" viewBox="0 0 40 40"><circle cx="20" cy="20" r="19.5" fill="#1f9aa0"/><g fill="none" stroke="#fff" stroke-width="0.9" stroke-linecap="round" stroke-linejoin="round" stroke-width="0.8"><polygon points="29.80,15.40 29.70,16.41 28.25,16.91 27.89,17.60 28.28,19.08 27.49,19.72 26.11,19.05 25.37,19.28 24.60,20.60 23.59,20.50 23.09,19.05 22.40,18.69 20.92,19.08 20.28,18.29 20.95,16.91 20.72,16.17 19.40,15.40 19.50,14.39 20.95,13.89 21.31,13.20 20.92,11.72 21.71,11.08 23.09,11.75 23.83,11.52 24.60,10.20 25.61,10.30 26.11,11.75 26.80,12.11 28.28,11.72 28.92,12.51 28.25,13.89 28.48,14.63" fill="none" stroke="#fff" stroke-width="0.8" stroke-linejoin="round"/><circle cx="24.6" cy="15.4" r="1.98" fill="none" stroke="#fff" stroke-width="0.8"/><polygon points="15.70,22.00 15.63,22.76 14.54,23.13 14.26,23.65 14.56,24.76 13.97,25.24 12.93,24.74 12.38,24.91 11.80,25.90 11.04,25.83 10.67,24.74 10.15,24.46 9.04,24.76 8.56,24.17 9.06,23.13 8.89,22.58 7.90,22.00 7.97,21.24 9.06,20.87 9.34,20.35 9.04,19.24 9.63,18.76 10.67,19.26 11.22,19.09 11.80,18.10 12.56,18.17 12.93,19.26 13.45,19.54 14.56,19.24 15.04,19.83 14.54,20.87 14.71,21.42" fill="none" stroke="#fff" stroke-width="0.8" stroke-linejoin="round"/><circle cx="11.8" cy="22" r="1.48" fill="none" stroke="#fff" stroke-width="0.8"/><path d="M19.4 12 Q15 11.6 13.6 16.6 M15.6 24.6 Q17.6 26.4 17.8 28.6 H21.4 Q21.6 26 23.6 23.4 Q25 22.4 25.4 20.8"/><path d="M17.8 30.2H21.4M18.4 31.8H20.8"/><path d="M17.4 15.6 Q15.8 18 18.4 20.4 L18.4 23.2" stroke-width="0.7"/><path d="M9.4 11.2L11 12.8M8.8 15H11M12.8 8.8L13.6 10.8M26.8 23.8L28.8 23.2M26.4 26L28.2 27.2M24.8 28.2L25.6 29.8"/></g></svg>
<svg class="abs" style="left:662.85px;top:593.6px" width="40" height="40" viewBox="0 0 40 40"><circle cx="20" cy="20" r="19.5" fill="#f0964a"/><g fill="none" stroke="#fff" stroke-width="0.9" stroke-linecap="round" stroke-linejoin="round"><rect x="15.4" y="8.8" width="9.2" height="9.4" rx="1.4"/><rect x="16.9" y="10.3" width="6.2" height="6.4" rx="0.6" stroke-width="0.7"/><path d="M19 15.4 V11.6 H20.6 Q21.6 11.6 21.6 12.7 Q21.6 13.8 20.6 13.8 H19" stroke-width="0.9"/><path d="M19.2 18.2 V25.2 M20.8 18.2 V25.2"/><circle cx="20" cy="26.8" r="1.7"/><path d="M18.6 27.8 L12.6 31 M21.4 27.8 L27.4 31"/><path d="M8.6 31.9 H31.4" stroke-width="1.7"/></g></svg>
<svg class="abs" style="left:703.15px;top:593.6px" width="40" height="40" viewBox="0 0 40 40"><circle cx="20" cy="20" r="19.5" fill="#b66ada"/><g fill="none" stroke="#fff" stroke-width="0.9" stroke-linecap="round" stroke-linejoin="round"><rect x="9.4" y="13.2" width="21.2" height="16" rx="1.6" stroke-width="1"/><path d="M9.4 17.6 H30.6" stroke-width="1"/><path d="M12.8 11.6V15M17.6 11.6V15M22.4 11.6V15M27.2 11.6V15" stroke-width="1.1"/><text x="20" y="27" text-anchor="middle" font-size="9" font-family="Liberation Sans" font-weight="bold" fill="#fff" stroke="none">$</text></g></svg>
<svg class="abs" style="left:743.45px;top:593.6px" width="40" height="40" viewBox="0 0 40 40"><circle cx="20" cy="20" r="19.5" fill="#f0481a"/><g fill="none" stroke="#fff" stroke-width="0.9" stroke-linecap="round" stroke-linejoin="round" stroke-width="1"><path d="M8.4 14.6 L13.2 8.6 Q13.9 8 14.7 8.8 L18.3 12.8 Q18.9 13.6 18.1 14.4 L14.5 17.6 Q15.8 22.4 22.6 26.7 L26.8 23 Q27.6 22.4 28.4 23.2 L32.6 27.4 Q33.2 28.2 32.4 29 L28 32.6 Q26.6 33.3 24.6 32.6 Q11.4 27.6 8.2 16 Q8 15.2 8.4 14.6 Z"/><path d="M12.6 11.4 L15.4 14.4 M27.2 25.8 L30 28.6" stroke-width="0.6"/></g></svg>
<svg class="abs" style="left:783.75px;top:593.6px" width="40" height="40" viewBox="0 0 40 40"><circle cx="20" cy="20" r="19.5" fill="#9c9592"/><g><path d="M9.4 14 Q9.4 11.9 11.5 11.9 H16.5 Q18.6 11.9 18.6 14 V26 Q20.7 26.4 20.7 28.6 V30.6 Q20.7 31.6 19.7 31.6 H8.3 Q7.3 31.6 7.3 30.6 V28.6 Q7.3 26.4 9.4 26 Z" fill="#fff"/><rect x="11.9" y="15.6" width="4.6" height="4" fill="#a39c99"/><path d="M20 24.2 L33.6 12.5" stroke="#1a1a1a" stroke-width="3.2"/><path d="M20.6 23.7 L33.4 12.7" stroke="#e8703e" stroke-width="1.3" stroke-dasharray="1.2 1.0"/></g></svg>
<svg class="abs" style="left:824.05px;top:593.6px" width="40" height="40" viewBox="0 0 40 40"><circle cx="20" cy="20" r="19.5" fill="#e85555"/><g fill="none" stroke="#fff" stroke-width="0.9" stroke-linecap="round" stroke-linejoin="round"><path d="M6.4 24.4 V18.4 Q6.4 14.4 10.4 14.4 H31.6 Q34 14.4 34 16.8 V23.4 Q34 25.2 32.4 25.2 H30.6 M25.8 25.2 H14.4 M9.6 25.2 H7.4 Q6.4 25.2 6.4 24.4"/><path d="M7.4 16.6 H33 M6.6 19.6 H34 M12 16.6V19.6M16.6 16.6V19.6M21.2 16.6V19.6M25.8 16.6V19.6M30.4 16.6V19.6"/><path d="M6.6 22.2H34" stroke-width="0.7"/><circle cx="12" cy="25" r="2.2"/><circle cx="28.2" cy="25" r="2.2"/></g></svg>
<svg class="abs" style="left:864.35px;top:593.6px" width="40" height="40" viewBox="0 0 40 40"><circle cx="20" cy="20" r="19.5" fill="#1a8ef2"/><g fill="none" stroke="#fff" stroke-width="0.9" stroke-linecap="round" stroke-linejoin="round" stroke-width="1"><path d="M27.2 10.6 Q29.4 8.8 30.8 9.6 Q31.4 11 29.6 13.2 L17.4 26.4 Q15.6 27.8 14.2 27.2 Q13 26.4 14 24.4 Z"/><path d="M21.6 16.4 L10.4 12.6 L9.7 14.2 L16.6 21.6"/><path d="M25.2 18.4 L27.6 30.4 L26.2 31 L20.6 23"/><path d="M14.4 23.8 L10 22.8 L9.6 24 L13.6 26.2"/><path d="M16.4 27.4 L17.4 30.8 L16.2 31.2 L14.4 27.4"/><path d="M19.4 12.8 L20.8 11.2 L22 12.4 M27.2 19.8 L28.8 18.4 L29.8 19.6" stroke-width="0.9"/><path d="M28.4 11.8 L16.2 24.8" stroke-width="0.5"/></g></svg>
<svg class="abs" style="left:904.65px;top:593.6px" width="40" height="40" viewBox="0 0 40 40"><circle cx="20" cy="20" r="19.5" fill="#edb144"/><g fill="none" stroke="#fff" stroke-width="0.9" stroke-linecap="round" stroke-linejoin="round"><path d="M15.2 15.6 Q15.2 9.4 20.6 9.4 Q26 9.4 26 15.6 Q26 21.8 20.6 21.8 Q15.2 21.8 15.2 15.6 Z"/><path d="M16.6 13.6 Q19.6 11.8 21.6 13 Q23.6 14 25.4 13"/><path d="M17.6 21 V23 L9.8 25.6 Q8.8 26 8.8 27.2 M23.6 21 V23 L31.4 25.6 Q32.4 26 32.4 26.6"/><path d="M18.4 24 L20.6 25.2 L22.8 24 V26.4 L20.6 25.2 L18.4 26.4 Z" stroke-width="0.7"/><rect x="8.8" y="28.2" width="14" height="3"/><path d="M10.4 28.2V29.6M12 28.2V29.6M13.6 28.2V29.6M15.2 28.2V29.6M16.8 28.2V29.6M18.4 28.2V29.6M20 28.2V29.6M21.6 28.2V29.6" stroke-width="0.6"/><polygon points="32.50,28.40 32.43,29.16 31.34,29.53 31.06,30.05 31.36,31.16 30.77,31.64 29.73,31.14 29.18,31.31 28.60,32.30 27.84,32.23 27.47,31.14 26.95,30.86 25.84,31.16 25.36,30.57 25.86,29.53 25.69,28.98 24.70,28.40 24.77,27.64 25.86,27.27 26.14,26.75 25.84,25.64 26.43,25.16 27.47,25.66 28.02,25.49 28.60,24.50 29.36,24.57 29.73,25.66 30.25,25.94 31.36,25.64 31.84,26.23 31.34,27.27 31.51,27.82" fill="none" stroke="#fff" stroke-width="0.8" stroke-linejoin="round"/><circle cx="28.6" cy="28.4" r="1.48" fill="none" stroke="#fff" stroke-width="0.8"/></g></svg>
<svg class="abs" style="left:944.95px;top:593.6px" width="40" height="40" viewBox="0 0 40 40"><circle cx="20" cy="20" r="19.5" fill="#edb144"/><g fill="none" stroke="#fff" stroke-width="0.9" stroke-linecap="round" stroke-linejoin="round"><path d="M15.2 15.6 Q15.2 9.4 20.6 9.4 Q26 9.4 26 15.6 Q26 21.8 20.6 21.8 Q15.2 21.8 15.2 15.6 Z"/><path d="M16.6 13.6 Q19.6 11.8 21.6 13 Q23.6 14 25.4 13"/><path d="M17.6 21 V23 L9.8 25.6 Q8.8 26 8.8 27.2 M23.6 21 V23 L31.4 25.6 Q32.4 26 32.4 26.6"/><path d="M18.4 24 L20.6 25.2 L22.8 24 V26.4 L20.6 25.2 L18.4 26.4 Z" stroke-width="0.7"/><rect x="8.8" y="28.2" width="14" height="3"/><path d="M10.4 28.2V29.6M12 28.2V29.6M13.6 28.2V29.6M15.2 28.2V29.6M16.8 28.2V29.6M18.4 28.2V29.6M20 28.2V29.6M21.6 28.2V29.6" stroke-width="0.6"/><polygon points="32.50,28.40 32.43,29.16 31.34,29.53 31.06,30.05 31.36,31.16 30.77,31.64 29.73,31.14 29.18,31.31 28.60,32.30 27.84,32.23 27.47,31.14 26.95,30.86 25.84,31.16 25.36,30.57 25.86,29.53 25.69,28.98 24.70,28.40 24.77,27.64 25.86,27.27 26.14,26.75 25.84,25.64 26.43,25.16 27.47,25.66 28.02,25.49 28.60,24.50 29.36,24.57 29.73,25.66 30.25,25.94 31.36,25.64 31.84,26.23 31.34,27.27 31.51,27.82" fill="none" stroke="#fff" stroke-width="0.8" stroke-linejoin="round"/><circle cx="28.6" cy="28.4" r="1.48" fill="none" stroke="#fff" stroke-width="0.8"/></g></svg>
<!--/BICONS-->
</body>
</html>
